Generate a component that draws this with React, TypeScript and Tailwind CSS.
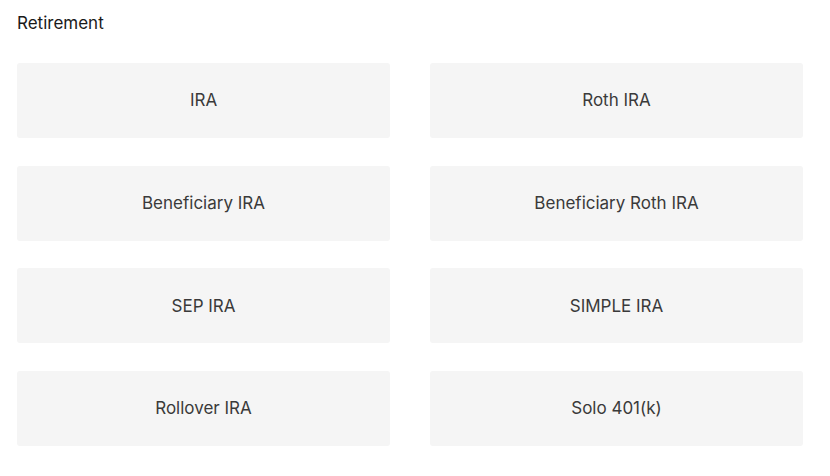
const ACCOUNTS = [
  'IRA',
  'Roth IRA',
  'Beneficiary IRA',
  'Beneficiary Roth IRA',
  'SEP IRA',
  'SIMPLE IRA',
  'Rollover IRA',
  'Solo 401(k)',
];

export default function App() {
  return (
    <div className="min-h-screen bg-white pl-[17px] pr-[27px] pt-[11px] font-['Inter',sans-serif]">
      <h2 className="text-[17px] leading-6 font-normal text-[#1a1a1a]">Retirement</h2>
      <div className="mt-[28px] grid grid-cols-2 gap-x-[40px] gap-y-[27.7px]">
        {ACCOUNTS.map(name => (
          <button
            key={name}
            type="button"
            className="flex h-[75px] items-center justify-center rounded-[3px] bg-[#f5f5f5] pt-px text-[17px] text-[#3a3a3a]"
          >
            {name}
          </button>
        ))}
      </div>
    </div>
  );
}
